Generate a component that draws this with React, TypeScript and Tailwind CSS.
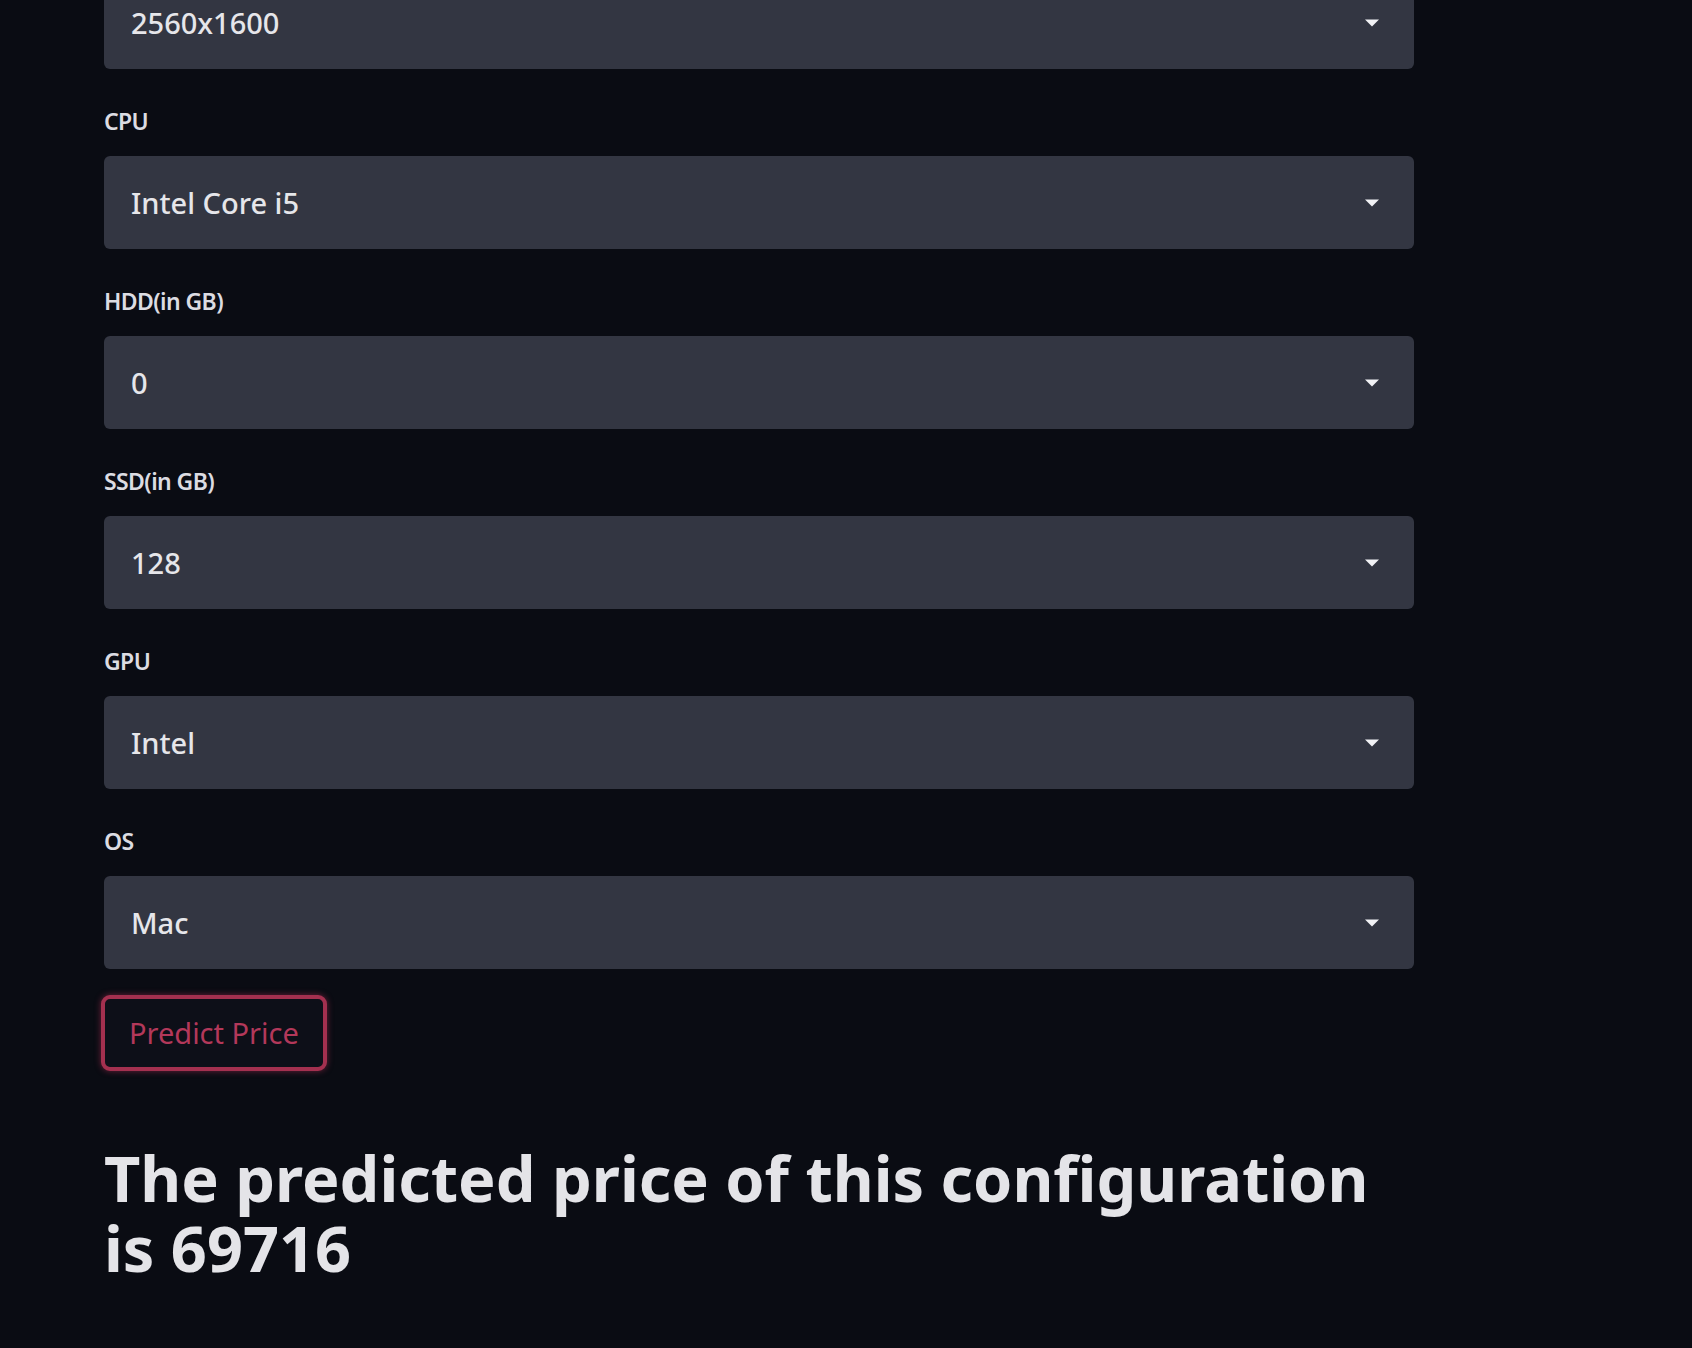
import React from 'react';

const fields = [
  { label: 'Resolution', value: '2560x1600' },
  { label: 'CPU', value: 'Intel Core i5' },
  { label: 'HDD(in GB)', value: '0' },
  { label: 'SSD(in GB)', value: '128' },
  { label: 'GPU', value: 'Intel' },
  { label: 'OS', value: 'Mac' },
];

function Caret() {
  return (
    <svg width="16" height="8" viewBox="0 0 16 8" className="shrink-0">
      <path d="M1 0.5 L15 0.5 L8 7.5 Z" fill="#f2f2f5" />
    </svg>
  );
}

function SelectBox({ value }: { value: string }) {
  return (
    <div className="flex h-[93px] items-center justify-between rounded-[6px] bg-[#333642] pl-[27px] pr-[34px]">
      <span className="text-[29px] font-medium text-[#e6e6ea]">{value}</span>
      <Caret />
    </div>
  );
}

export default function App() {
  return (
    <div className="h-[1348px] overflow-hidden bg-[#0a0c13]" style={{ fontFamily: '"Noto Sans", sans-serif' }}>
      <div className="ml-[104px] w-[1310px] -mt-[24px] flex flex-col">
        {fields.map((f, i) => (
          <div key={f.label} className={i === 0 ? '' : 'mt-[37px]'}>
            {i !== 0 && (
              <div className="mb-[20px] h-[30px] leading-[30px] text-[23px] font-semibold tracking-[-0.6px] text-[#dcdce2]">
                {f.label}
              </div>
            )}
            <SelectBox value={f.value} />
          </div>
        ))}
        <div className="mt-[26px] -ml-[3px]">
          <button className="h-[76px] rounded-[9px] border-[4px] border-[#a3304f] bg-[#0d0f18] px-[24px] text-[29px] text-[#b3385a] shadow-[0_0_6px_rgba(190,50,90,0.55)]">
            Predict Price
          </button>
        </div>
        <h1 className="mt-[72px] text-[63px] font-bold leading-[70px] text-[#e4e4e8]">
          The predicted price of this configuration is 69716
        </h1>
      </div>
    </div>
  );
}
